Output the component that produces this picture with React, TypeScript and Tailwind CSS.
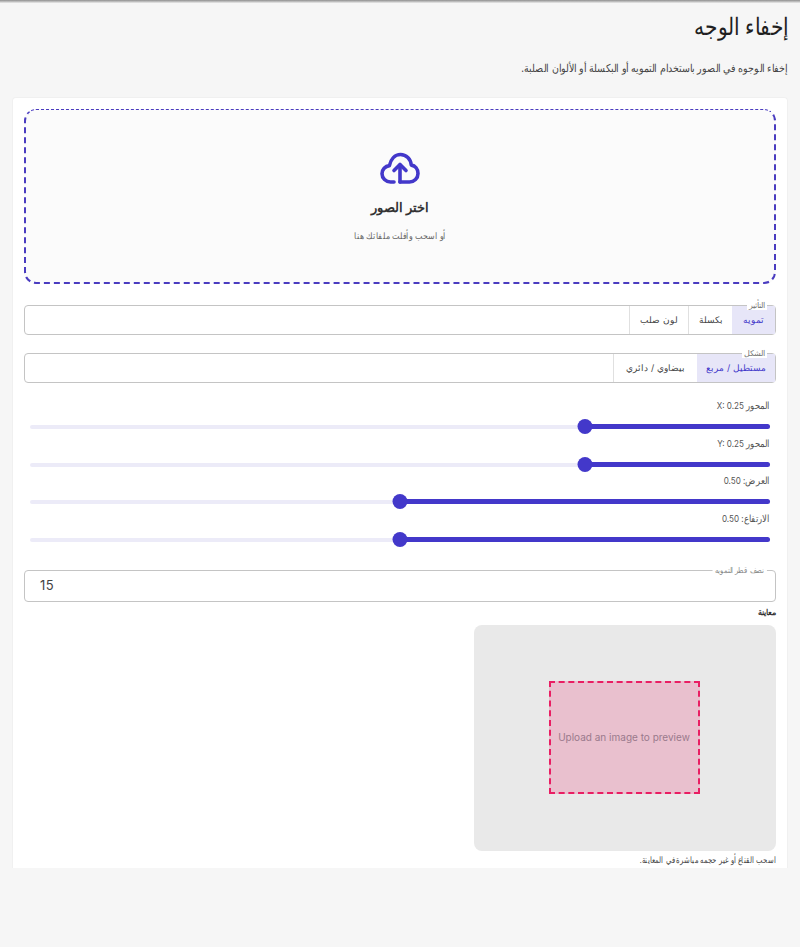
import React from "react";

const Slider = ({ label, value }: { label: string; value: number }) => {
  // rtl slider: the filled part starts on the right
  const pct = value * 100;
  return (
    <div className="h-[37.67px]">
      <div className="mx-[6px] h-[13px] origin-right scale-x-[0.85] text-[9.5px] leading-[13px] text-[#555]">{label}</div>
      <div className="relative mx-[6px] mt-[12px] h-[6px]">
        <div className="h-[4px] translate-y-[1px] rounded-full bg-[#ecebf8]" />
        <div
          className="absolute top-0 right-0 h-[5px] rounded-full bg-[#4338ca]"
          style={{ width: `${pct}%` }}
        />
        <div
          className="absolute top-[-5px] h-[15px] w-[15px] translate-x-[7.5px] rounded-full bg-[#4338ca]"
          style={{ right: `${pct}%` }}
        />
      </div>
    </div>
  );
};

const Toggle = ({
  legend,
  options,
  widths,
}: {
  legend: string;
  options: string[];
  widths: string[];
}) => (
  <div className="relative flex h-[30px] rounded border border-[#c4c4c4] bg-white">
    <span className="absolute top-[-6px] right-[8px] bg-white px-[2px] text-[8px] leading-[10px] text-[#777]">
      {legend}
    </span>
    {options.map((o, i) => (
      <div
        key={o}
        className={
          i === 0
            ? "flex items-center justify-center bg-[#e7e6f8] text-[9px] text-[#4338ca]"
            : "flex items-center justify-center border-l border-[#e0e0e0] text-[9px] text-[#444]"
        }
        style={{ width: widths[i] }}
      >
        {o}
      </div>
    ))}
  </div>
);

export default function App() {
  return (
    <div
      dir="rtl"
      className="relative h-[947px] overflow-hidden bg-[#f6f6f6] font-['Inter',sans-serif]"
    >
      <div className="h-[3px] bg-gradient-to-b from-[#8f8f8f] to-[#ececec]" />
      <div className="px-[12px]">
        <h1 className="mt-[8px] mr-[-1px] h-[32px] origin-right scale-x-[0.84] text-[24px] leading-[32px] font-normal text-[#1f1f1f]">
          إخفاء الوجه
        </h1>
        <p className="mt-[18px] h-[14px] origin-right scale-x-[0.86] text-[11px] leading-[14px] text-[#444]">
          إخفاء الوجوه في الصور باستخدام التمويه أو البكسلة أو الألوان الصلبة.
        </p>
      </div>
      <div className="mx-[12px] mt-[22px] h-[771px] overflow-hidden rounded-t border-x border-t border-[#f0f0f0] bg-white px-[11px] pt-[11px]">
        <div className="flex h-[175px] flex-col items-center rounded-xl border-2 border-t border-dashed border-[#4a3cc0] bg-[#fbfbfb]">
          <svg
            className="mt-[42px]"
            width="40"
            height="34"
            viewBox="0 0 40 34"
            fill="none"
            stroke="#4338ca"
            strokeWidth="3.6"
            strokeLinecap="round"
            strokeLinejoin="round"
          >
            <path d="M14 30H10.5C5.8 30 2 26.2 2 21.8c0-4.2 3.2-7.7 7.4-8.2C10.8 7.2 14.8 2.5 20.5 2.5c5.8 0 10.2 4.6 10.8 10.6 3.9.5 6.7 4 6.7 8.3 0 4.8-3.8 8.6-8.5 8.6H20" />
            <path d="M20 30V13" />
            <path d="M14 18.5 20 12.5 26 18.5" />
          </svg>
          <div className="mt-[12px] text-[12.5px] leading-[20px] font-bold text-[#333]">اختر الصور</div>
          <div className="mt-[11px] origin-center scale-x-[0.88] text-[9px] leading-[14px] text-[#666]">
            أو اسحب وأفلت ملفاتك هنا
          </div>
        </div>

        <div className="mt-[21px]">
          <Toggle legend="التأثير" options={["تمويه", "بكسلة", "لون صلب"]} widths={["43px", "44px", "59px"]} />
        </div>
        <div className="mt-[18px]">
          <Toggle legend="الشكل" options={["مستطيل / مربع", "بيضاوي / دائري"]} widths={["78px", "84px"]} />
        </div>

        <div className="mt-[16px]">
          <Slider label="المحور X: 0.25" value={0.25} />
          <Slider label="المحور Y: 0.25" value={0.25} />
          <Slider label="العرض: 0.50" value={0.5} />
          <Slider label="الارتفاع: 0.50" value={0.5} />
        </div>

        <div className="relative mt-[20px] flex h-[32px] items-center rounded border border-[#c4c4c4] px-[15px] text-[13px] text-[#444]">
          <span className="absolute top-[-6px] right-[9px] origin-right scale-x-[0.85] bg-white px-[3px] text-[8px] leading-[10px] text-[#888]">
            نصف قطر التمويه
          </span>
          <span dir="ltr" className="mr-auto tracking-[0.5px]">15</span>
        </div>
        <div className="mt-[3px] h-[16px] text-[8px] leading-[14px] font-bold text-[#333]">معاينة</div>
        <div className="mt-[4px] flex h-[226px] w-[302px] justify-center rounded-lg bg-[#e9e9e9]">
          <div className="mt-[56px] mr-[2px] flex h-[113px] w-[151px] items-center justify-center border-2 border-dashed border-[#e91e63] bg-[#e91e63]/20">
            <span dir="ltr" className="text-[10px] text-[#9a7a8c]">Upload an image to preview</span>
          </div>
        </div>
        <div className="mt-[3px] origin-right scale-x-[0.76] text-[8.5px] leading-[12px] text-[#444]">
          اسحب القناع أو غير حجمه مباشرة في المعاينة.
        </div>
      </div>
    </div>
  );
}
